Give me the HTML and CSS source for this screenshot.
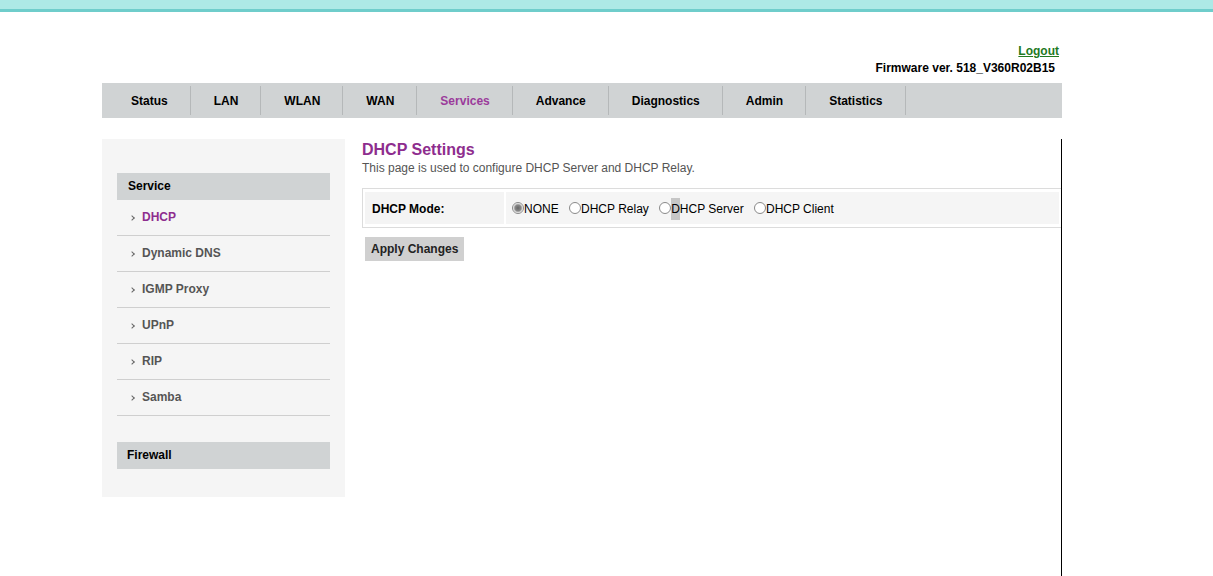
FILE: index.html
```
<!DOCTYPE html>
<html lang="en">
<head>
    <meta charset="UTF-8">
    <title>DHCP Settings</title>
    <link rel="stylesheet" href="styles.css">
</head>
<body>
    <div class="topbar"></div>

    <div class="page">
        <div class="header">
            <a href="#" class="logout">Logout</a>
            <div class="firmware">Firmware ver. 518_V360R02B15</div>
        </div>

        <!-- Main menu -->
        <ul class="nav">
            <li>Status</li>
            <li>LAN</li>
            <li>WLAN</li>
            <li>WAN</li>
            <li class="active">Services</li>
            <li>Advance</li>
            <li>Diagnostics</li>
            <li>Admin</li>
            <li>Statistics</li>
        </ul>

        <div class="layout">
            <!-- Side menu -->
            <div class="sidebar">
                <div class="side-head">Service</div>
                <ul class="side-list">
                    <li class="active">DHCP</li>
                    <li>Dynamic DNS</li>
                    <li>IGMP Proxy</li>
                    <li>UPnP</li>
                    <li>RIP</li>
                    <li>Samba</li>
                </ul>
                <div class="side-head firewall">Firewall</div>
            </div>

            <!-- Content -->
            <div class="content">
                <h2>DHCP Settings</h2>
                <p class="intro">This page is used to configure DHCP Server and DHCP Relay.</p>

                <table class="settings">
                    <tr>
                        <td class="label">DHCP Mode:</td>
                        <td class="value">
                            <label><input type="radio" name="dhcpMode" checked>NONE</label>
                            <label><input type="radio" name="dhcpMode">DHCP Relay</label>
                            <label><input type="radio" name="dhcpMode"><span class="caret">D</span>HCP Server</label>
                            <label><input type="radio" name="dhcpMode">DHCP Client</label>
                        </td>
                    </tr>
                </table>

                <button type="button" class="apply">Apply Changes</button>
            </div>
        </div>
    </div>
</body>
</html>
```

FILE: styles.css
```
body {
    margin: 0;
    font-family: "Liberation Sans", Arial, sans-serif;
    font-size: 12px;
    color: #000;
    background-color: #fff;
}
.topbar {
    height: 9px;
    background-color: #ade9e6;
    border-bottom: 3px solid #6fcdcb;
}
.page {
    width: 960px;
    margin-left: 102px;
}
.header {
    padding-top: 32px;
    text-align: right;
    font-weight: bold;
    line-height: 14px;
}
.logout {
    display: inline-block;
    margin-right: 3px;
    color: #1f7a1f;
}
.firmware {
    margin-top: 3px;
    margin-right: 7px;
}
.nav {
    display: flex;
    margin: 8px 0 0 0;
    padding: 0 0 0 6px;
    list-style: none;
    height: 35px;
    background-color: #d0d3d4;
}
.nav li {
    display: flex;
    align-items: center;
    padding: 0 22px 0 23px;
    margin: 3px 0;
    font-weight: bold;
    border-right: 1px solid #b5b8b9;
}
.nav li.active {
    color: #9b3b9b;
}
.layout {
    display: flex;
    align-items: flex-start;
    margin-top: 21px;
}
.sidebar {
    width: 213px;
    padding: 34px 15px 28px 15px;
    background-color: #f5f5f5;
}
.side-head {
    height: 27px;
    line-height: 27px;
    padding-left: 11px;
    font-weight: bold;
    background-color: #d0d3d4;
}
.side-head.firewall {
    margin-top: 26px;
    padding-left: 10px;
}
.side-list {
    margin: 0;
    padding: 0;
    list-style: none;
}
.side-list li {
    height: 35px;
    line-height: 35px;
    padding-left: 25px;
    position: relative;
    font-weight: bold;
    color: #555;
    border-bottom: 1px solid #cfcfcf;
}
.side-list li::before {
    content: "";
    position: absolute;
    left: 13px;
    top: 16px;
    width: 3px;
    height: 3px;
    border-right: 1px solid #666;
    border-bottom: 1px solid #666;
    transform: rotate(-45deg);
}
.side-list li.active {
    color: #8e2d8e;
}
.content {
    flex: 1;
    min-height: 437px;
    padding: 1px 0 0 17px;
    border-right: 1px solid #000;
}
.content h2 {
    margin: 0;
    font-size: 16px;
    line-height: 19px;
    color: #8e2d8e;
}
.intro {
    margin: 2px 0 0 0;
    line-height: 14px;
    color: #555;
}
.settings {
    width: 699px;
    margin-top: 13px;
    border: 1px solid #dcdcdc;
    border-right: none;
    border-spacing: 2px 3px;
}
.settings td {
    height: 30px;
    padding: 2px 0 0 0;
    background-color: #f4f4f4;
}
.settings .label {
    width: 132px;
    padding-left: 7px;
    font-weight: bold;
}
.settings .value {
    padding-left: 6px;
    background-color: #f5f5f5;
}
.value label {
    display: inline-flex;
    align-items: center;
    margin-right: 7px;
}
.value input {
    appearance: none;
    width: 12px;
    height: 12px;
    margin: 0 0 2px 0;
    border: 1px solid #8a8a8a;
    border-radius: 50%;
    background-color: #fff;
}
.value input:checked {
    background: radial-gradient(circle, #666 0, #888 3px, #c0c0c0 4px, #fff 5px);
}
.caret {
    background-color: #c6c6c6;
    padding: 4px 0;
}
.apply {
    margin: 9px 0 0 3px;
    padding: 0 6px;
    height: 24px;
    border: none;
    background-color: #d0d0d0;
    font-family: "Liberation Sans", Arial, sans-serif;
    font-size: 12px;
    font-weight: bold;
    color: #222;
}
```
